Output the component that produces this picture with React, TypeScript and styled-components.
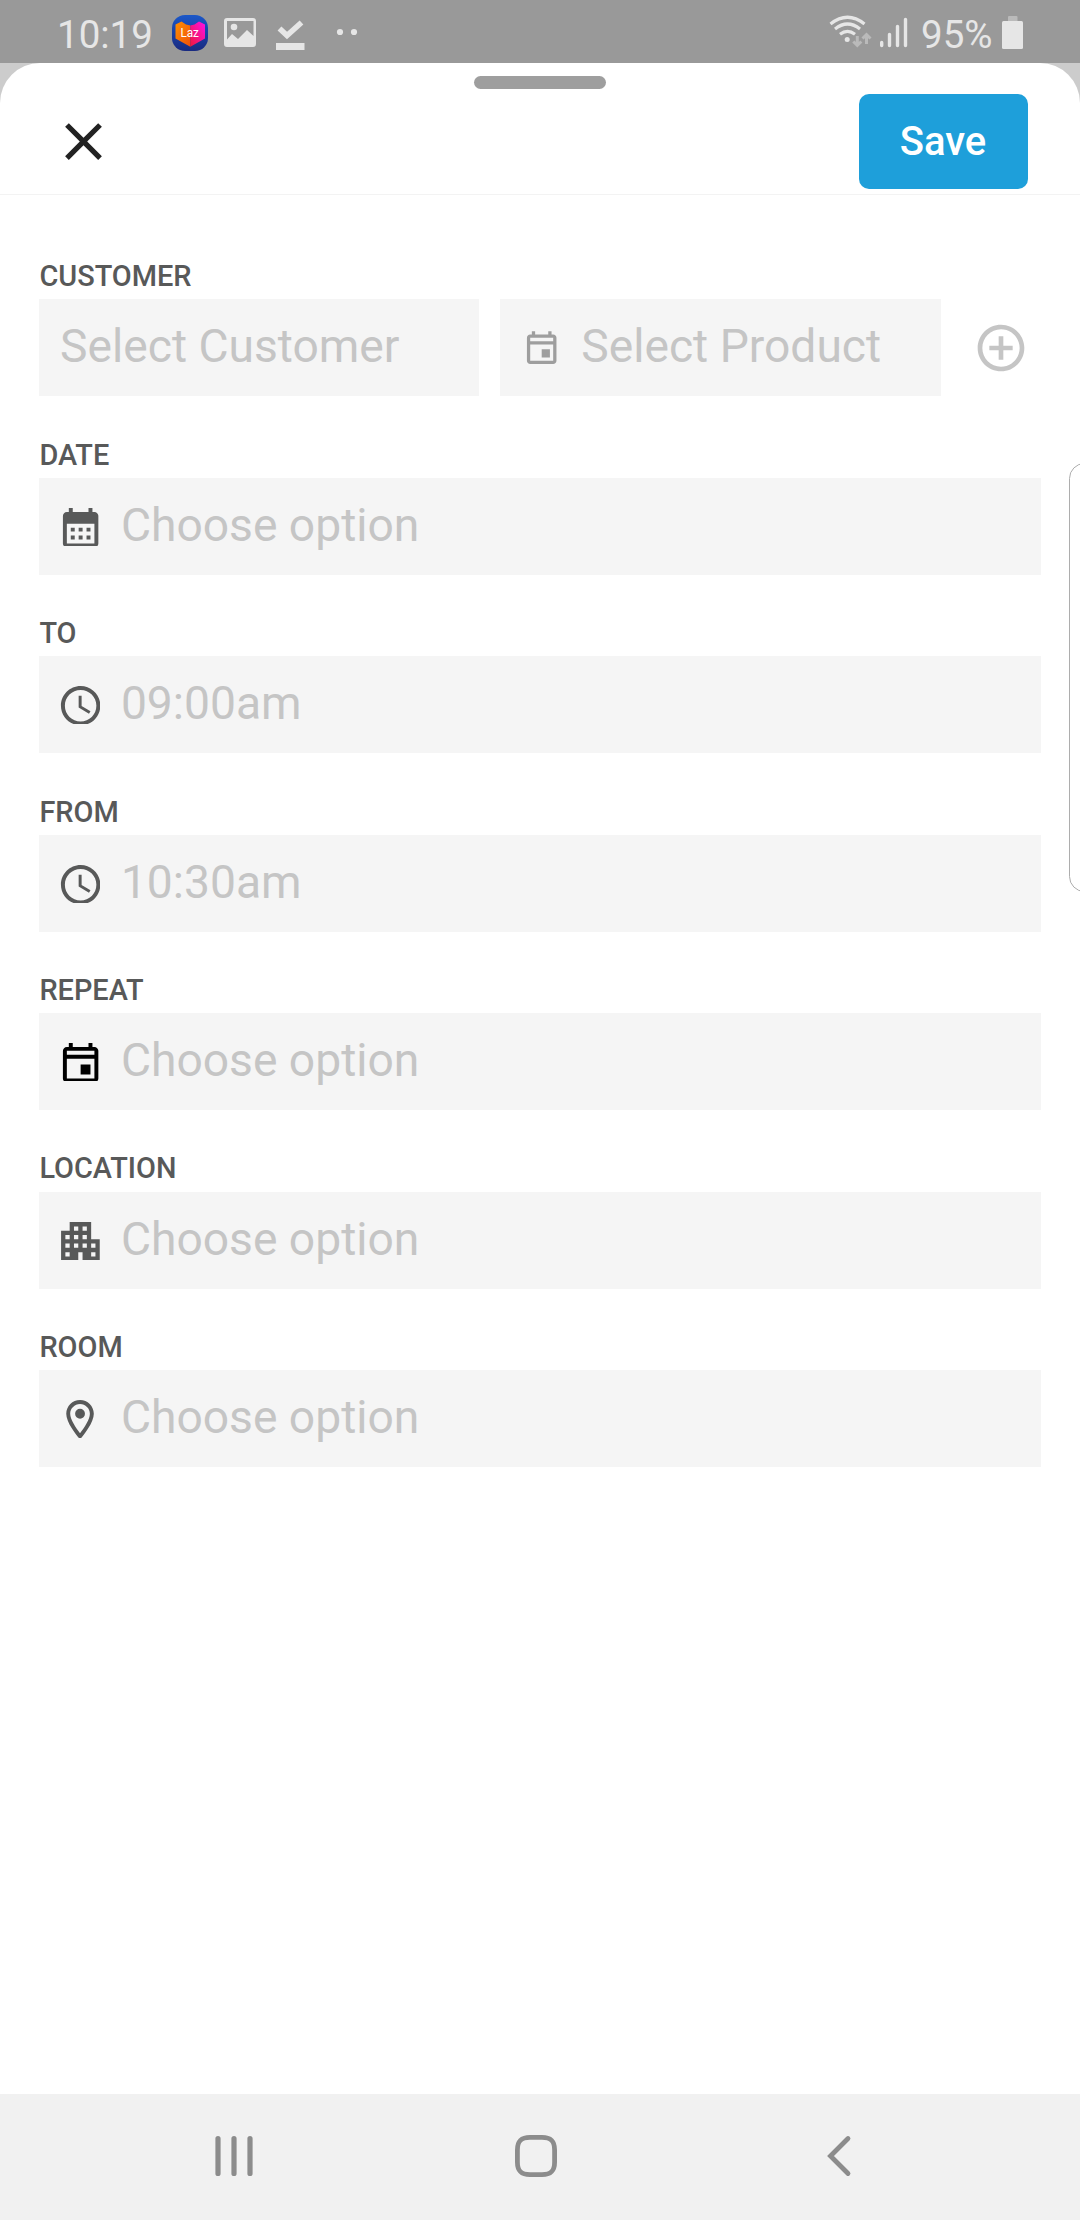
import React from 'react';
import styled, { createGlobalStyle } from 'styled-components';

const GlobalStyle = createGlobalStyle`
  * { box-sizing: border-box; }
  body { margin: 0; background: #ffffff; }
`;

const Screen = styled.div`
  position: relative;
  display: flex;
  flex-direction: column;
  width: 1080px;
  height: 2220px;
  overflow: hidden;
  background: #cccccc;
  font-family: Roboto, "Liberation Sans", sans-serif;
`;

const StatusBar = styled.header`
  display: flex;
  justify-content: space-between;
  flex: none;
  height: 63px;
  padding: 0 57px 0 57px;
  background: #999999;
  color: #e6e6e6;
`;

const StatusGroup = styled.div`
  display: flex;
  align-items: flex-start;
`;

const StatusText = styled.span<{ $width: number }>`
  width: ${(p) => p.$width}px;
  padding-top: 11.4px;
  font-size: 38.5px;
  line-height: 47px;
  white-space: nowrap;
`;

const StatusIcon = styled.svg<{ $gap?: number }>`
  flex: none;
  display: block;
  margin-left: ${(p) => p.$gap ?? 0}px;
`;

const Sheet = styled.main`
  flex: 1;
  display: flex;
  flex-direction: column;
  background: #ffffff;
  border-radius: 40px 40px 0 0;
`;

const SheetHeader = styled.div`
  display: flex;
  flex-direction: column;
  align-items: center;
  height: 132px;
  padding-top: 13px;
  border-bottom: 1px solid #f3f3f3;
`;

const DragHandle = styled.div`
  width: 132px;
  height: 13px;
  border-radius: 7px;
  background: #9e9e9e;
`;

const HeaderRow = styled.div`
  display: flex;
  align-items: center;
  justify-content: space-between;
  align-self: stretch;
  height: 105px;
  padding: 0 52px 0 52px;
`;

const CloseButton = styled.button`
  display: flex;
  padding: 0;
  border: 0;
  background: none;
  color: #222222;
`;

const SaveButton = styled.button`
  width: 169px;
  height: 95px;
  padding: 0 1px 0 0;
  border: 0;
  border-radius: 10px;
  background: #1e9fda;
  color: #ffffff;
  font-family: inherit;
  font-size: 40px;
  font-weight: 500;
`;

const Form = styled.form`
  display: flex;
  flex-direction: column;
  gap: 40.9px;
  padding: 64.05px 39.4px 0;
`;

const FieldGroup = styled.div`
  display: flex;
  flex-direction: column;
  gap: 6.2px;
  height: 137.6px;
`;

const Label = styled.label`
  height: 34px;
  color: #585959;
  font-size: 28.9px;
  font-weight: 500;
  line-height: 34px;
`;

const FieldRow = styled.div`
  display: flex;
  align-items: center;
`;

const Field = styled.div<{ $width?: number; $pad?: number; $gap?: number }>`
  display: flex;
  align-items: center;
  gap: ${(p) => p.$gap ?? 21}px;
  flex: none;
  width: ${(p) => (p.$width ? `${p.$width}px` : 'auto')};
  height: 97.1px;
  padding: 0 0 3.3px ${(p) => p.$pad ?? 17.5}px;
  background: #f5f5f5;
`;

const Placeholder = styled.span`
  color: #c5c5c5;
  font-size: 46.2px;
  line-height: 54px;
  white-space: nowrap;
`;

const IconSlot = styled.span<{ $color: string }>`
  display: block;
  flex: none;
  width: 43px;
  height: 42px;
  overflow: hidden;
  color: ${(p) => p.$color};
`;

const ProductIconSlot = styled.span`
  display: flex;
  margin-top: 3.6px;
  color: #9e9e9e;
`;

const Spacer = styled.div`
  width: 21px;
`;

const AddButton = styled.button`
  display: flex;
  margin-left: 32px;
  padding: 0;
  border: 0;
  background: none;
  color: #c5c5c5;
`;

const NavBar = styled.nav`
  display: flex;
  align-items: center;
  flex: none;
  height: 126px;
  padding: 0 0 2px 213px;
  background: #f1f1f1;
  color: #8c8c8c;
`;

const NavIcon = styled.svg<{ $gap?: number }>`
  flex: none;
  margin-left: ${(p) => p.$gap ?? 0}px;
  fill: none;
  stroke: currentColor;
  stroke-linecap: round;
`;

const EdgeHandle = styled.div`
  position: absolute;
  top: 463px;
  right: -20px;
  width: 31px;
  height: 429px;
  border: 1.5px solid #adadad;
  border-radius: 17px;
  background: #ffffff;
`;

const PATHS = {
  close:
    'M19 6.41 17.59 5 12 10.59 6.41 5 5 6.41 10.59 12 5 17.59 6.41 19 12 13.41 17.59 19 19 17.59 13.41 12z',
  add: 'M13 7h-2v4H7v2h4v4h2v-4h4v-2h-4V7zm-1-5C6.48 2 2 6.48 2 12s4.48 10 10 10 10-4.48 10-10S17.52 2 12 2zm0 18c-4.41 0-8-3.59-8-8s3.59-8 8-8 8 3.59 8 8-3.59 8-8 8z',
  event:
    'M19 4h-1V2h-2v2H8V2H6v2H5c-1.11 0-1.99.9-1.99 2L3 20c0 1.1.89 2 2 2h14c1.1 0 2-.9 2-2V6c0-1.1-.9-2-2-2zm0 16H5V10h14v10zm0-12H5V6h14v2zm-7 5h5v5h-5z',
  month:
    'M19 4h-1V2h-2v2H8V2H6v2H5c-1.11 0-1.99.9-1.99 2L3 20c0 1.1.89 2 2 2h14c1.1 0 2-.9 2-2V6c0-1.1-.9-2-2-2zm0 16H5V10h14v10zM9 14H7v-2h2v2zm4 0h-2v-2h2v2zm4 0h-2v-2h2v2zm-8 4H7v-2h2v2zm4 0h-2v-2h2v2zm4 0h-2v-2h2v2z',
  clock:
    'M11.99 2C6.47 2 2 6.48 2 12s4.47 10 9.99 10C17.52 22 22 17.52 22 12S17.52 2 11.99 2zM12 20c-4.42 0-8-3.58-8-8s3.58-8 8-8 8 3.58 8 8-3.58 8-8 8zm.5-13H11v6l5.25 3.15.75-1.23-4.5-2.67z',
  apartment:
    'M17 11V3H7v4H3v14h8v-4h2v4h8V11h-4zM7 19H5v-2h2v2zm0-4H5v-2h2v2zm0-4H5V9h2v2zm4 4H9v-2h2v2zm0-4H9V9h2v2zm0-4H9V5h2v2zm4 8h-2v-2h2v2zm0-4h-2V9h2v2zm0-4h-2V5h2v2zm4 12h-2v-2h2v2zm0-4h-2v-2h2v2z',
  pin: 'M12 2C8.13 2 5 5.13 5 9c0 5.25 7 13 7 13s7-7.75 7-13c0-3.87-3.13-7-7-7zM7 9c0-2.76 2.24-5 5-5s5 2.24 5 5c0 2.88-2.88 7.19-5 9.88C9.92 16.21 7 11.85 7 9zm5-2.5a2.5 2.5 0 100 5 2.5 2.5 0 000-5z',
};

type IconName = keyof typeof PATHS;

function Glyph({ name, size, viewBox = '0 0 24 24' }: { name: IconName; size: number; viewBox?: string }) {
  return (
    <svg width={size} height={size} viewBox={viewBox} fill="currentColor" fillRule="evenodd">
      <path d={PATHS[name]} />
    </svg>
  );
}

interface Option {
  label: string;
  placeholder: string;
  icon: IconName;
  color: string;
  viewBox?: string;
}

const OPTIONS: Option[] = [
  { label: 'DATE', placeholder: 'Choose option', icon: 'month', color: '#585959' },
  { label: 'TO', placeholder: '09:00am', icon: 'clock', color: '#585959' },
  { label: 'FROM', placeholder: '10:30am', icon: 'clock', color: '#585959' },
  { label: 'REPEAT', placeholder: 'Choose option', icon: 'event', color: '#000000' },
  { label: 'LOCATION', placeholder: 'Choose option', icon: 'apartment', color: '#585959', viewBox: '1.1 1.1 22 22' },
  { label: 'ROOM', placeholder: 'Choose option', icon: 'pin', color: '#585959', viewBox: '0.3 0 24 24' },
];

function LazLogo() {
  return (
    <StatusIcon width="36" height="63" viewBox="0 -15 36 63" $gap={15}>
      <defs>
        <linearGradient id="lazBg" x1="0" y1="0" x2="0" y2="1">
          <stop offset="0" stopColor="#1b57c8" />
          <stop offset="1" stopColor="#192a80" />
        </linearGradient>
        <linearGradient id="lazLeft" x1="0" y1="0" x2="1" y2="1">
          <stop offset="0" stopColor="#ff9000" />
          <stop offset="1" stopColor="#f0500c" />
        </linearGradient>
        <linearGradient id="lazRight" x1="1" y1="0" x2="0" y2="1">
          <stop offset="0" stopColor="#ff10e8" />
          <stop offset="1" stopColor="#ef1838" />
        </linearGradient>
      </defs>
      <rect width="36" height="36" rx="13" fill="url(#lazBg)" />
      <path d="M3.500 9.500 9.500 6.500 14 9.500 18.300 10.500V31.800L3.500 23.500z" fill="url(#lazLeft)" />
      <path d="M33 9.500 27 6.500 22.500 9.500 18.300 10.500V31.800L33 23.500z" fill="url(#lazRight)" />
      <text
        x="8.400"
        y="22"
        fontSize="12"
        fontWeight="400"
        fontFamily="Roboto, sans-serif"
        fill="#ffffff"
        textLength="18.500"
        lengthAdjust="spacingAndGlyphs"
      >
        Laz
      </text>
    </StatusIcon>
  );
}

function NotificationIcons() {
  return (
    <>
      <LazLogo />
      <StatusIcon width="32" height="63" viewBox="224 0 32 63" $gap={16}>
        <path
          fill="currentColor"
          fillRule="evenodd"
          d="M227 18h26a3 3 0 0 1 3 3v23a3 3 0 0 1-3 3h-26a3 3 0 0 1-3-3V21a3 3 0 0 1 3-3zM227 21v18.500l5-5.500 6 5 9-9 6.500 6V21z"
        />
        <circle cx="234" cy="27" r="3.300" fill="currentColor" />
      </StatusIcon>
      <StatusIcon width="30" height="63" viewBox="275 0 30 63" $gap={19}>
        <path d="M279.500 28.500 287 35.500 301.500 22.500" fill="none" stroke="currentColor" strokeWidth="5.600" />
        <rect x="276" y="43" width="28.500" height="7" fill="currentColor" />
      </StatusIcon>
      <StatusIcon width="22" height="63" viewBox="336 0 22 63" $gap={31}>
        <circle cx="340" cy="32" r="3.100" fill="currentColor" />
        <circle cx="354" cy="32" r="3.100" fill="currentColor" />
      </StatusIcon>
    </>
  );
}

function SignalIcons() {
  return (
    <StatusIcon width="93" height="63" viewBox="828 0 93 63">
      <g fill="none" stroke="currentColor" strokeWidth="3.200">
        <path d="M830.500 24Q847.500 10.500 864.500 24" />
        <path d="M835 29Q847.500 19 860 29" />
        <path d="M840 34.300Q847.500 28.500 855 34.300" />
      </g>
      <circle cx="847.200" cy="39.500" r="2.500" fill="currentColor" />
      <g fill="none" stroke="#bababa" strokeWidth="3">
        <path d="M857.300 36v9M853.300 41.500l4 4 4-4M866.500 44v-9M862.500 38.500l4-4 4 4" />
      </g>
      <g stroke="currentColor" strokeWidth="3.400" strokeLinecap="round">
        <path d="M881.700 42.500v3M889.500 34.500v11M897.500 26.500v19M905.500 19.500v26" />
      </g>
    </StatusIcon>
  );
}

export default function App() {
  return (
    <>
      <GlobalStyle />
      <Screen>
        <StatusBar>
          <StatusGroup>
            <StatusText $width={100}>10:19</StatusText>
            <NotificationIcons />
          </StatusGroup>
          <StatusGroup>
            <SignalIcons />
            <StatusText $width={81}>95%</StatusText>
            <StatusIcon width="21" height="63" viewBox="1002 0 21 63">
              <rect x="1008" y="16" width="9.500" height="6" rx="1" fill="#bababa" />
              <rect x="1002" y="21" width="21" height="28" rx="1.500" fill="currentColor" />
            </StatusIcon>
          </StatusGroup>
        </StatusBar>
        <Sheet>
          <SheetHeader>
            <DragHandle />
            <HeaderRow>
              <CloseButton type="button" aria-label="Close">
                <Glyph name="close" size={63} />
              </CloseButton>
              <SaveButton type="button">Save</SaveButton>
            </HeaderRow>
          </SheetHeader>
          <Form>
            <FieldGroup>
              <Label>CUSTOMER</Label>
              <FieldRow>
                <Field $width={440.1} $pad={20.7}>
                  <Placeholder>Select Customer</Placeholder>
                </Field>
                <Spacer />
                <Field $width={440.1} $pad={21.4} $gap={20}>
                  <ProductIconSlot>
                    <Glyph name="event" size={39.4} />
                  </ProductIconSlot>
                  <Placeholder>Select Product</Placeholder>
                </Field>
                <AddButton type="button" aria-label="Add">
                  <Glyph name="add" size={56} />
                </AddButton>
              </FieldRow>
            </FieldGroup>
            {OPTIONS.map((o) => (
              <FieldGroup key={o.label}>
                <Label>{o.label}</Label>
                <Field>
                  <IconSlot $color={o.color}>
                    <Glyph name={o.icon} size={47.25} viewBox={o.viewBox} />
                  </IconSlot>
                  <Placeholder>{o.placeholder}</Placeholder>
                </Field>
              </FieldGroup>
            ))}
          </Form>
        </Sheet>
        <NavBar>
          <NavIcon width="42" height="46" viewBox="0 0 42 46" strokeWidth="5.200">
            <path d="M5 5.500v35M21 5.500v35M37 5.500v35" />
          </NavIcon>
          <NavIcon width="42" height="42" viewBox="0 0 42 42" strokeWidth="4.800" $gap={260}>
            <path d="M15 2.400h12C36 2.400 39.600 6 39.600 15v12c0 9-3.600 12.600-12.600 12.600H15C6 39.600 2.400 36 2.400 27V15C2.400 6 6 2.400 15 2.400z" />
          </NavIcon>
          <NavIcon width="26" height="42" viewBox="0 0 26 42" strokeWidth="4.800" $gap={269}>
            <path d="M22 3.500 4.500 21 22 38.500" />
          </NavIcon>
        </NavBar>
        <EdgeHandle />
      </Screen>
    </>
  );
}
